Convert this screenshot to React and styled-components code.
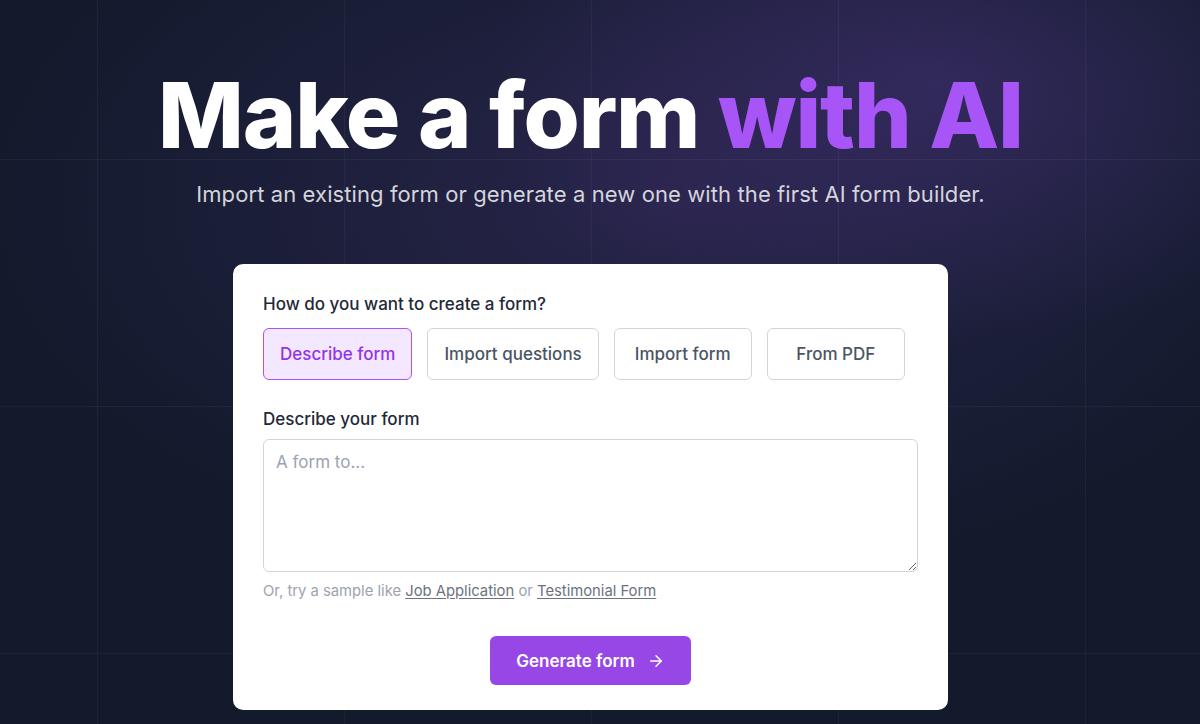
import styled, { createGlobalStyle } from 'styled-components';
import { useState } from 'react';

const GlobalStyle = createGlobalStyle`
  html, body {
    margin: 0;
    padding: 0;
    background: #121a2b;
  }
  * {
    box-sizing: border-box;
  }
  body {
    font-family: Inter, "Liberation Sans", sans-serif;
  }
`;

const modes = ['Describe form', 'Import questions', 'Import form', 'From PDF'];

export default function App() {
  const [mode, setMode] = useState('Describe form');

  return (
    <Page>
      <GlobalStyle />
      <Hero>
        <Title>
          Make a form <Accent>with AI</Accent>
        </Title>
        <Subtitle>
          Import an existing form or generate a new one with the first AI form builder.
        </Subtitle>
      </Hero>
      <Card>
        <Label>How do you want to create a form?</Label>
        <Modes>
          {modes.map(m => (
            <ModeButton
              key={m}
              type="button"
              $active={m === mode}
              onClick={() => setMode(m)}
            >
              {m}
            </ModeButton>
          ))}
        </Modes>
        <Label as="label" htmlFor="describe">
          Describe your form
        </Label>
        <TextArea id="describe" placeholder="A form to..." />
        <Hint>
          Or, try a sample like <HintLink href="#">Job Application</HintLink> or{' '}
          <HintLink href="#">Testimonial Form</HintLink>
        </Hint>
        <Footer>
          <GenerateButton type="button">
            Generate form
            <svg width="18" height="18" viewBox="0 0 24 24" fill="none" stroke="currentColor" strokeWidth="2" strokeLinecap="round" strokeLinejoin="round">
              <path d="M5 12h14" />
              <path d="M12 5l7 7-7 7" />
            </svg>
          </GenerateButton>
        </Footer>
      </Card>
    </Page>
  );
}

/* content is centred a little left of the middle: the real page had a scrollbar */
const Page = styled.div`
  position: relative;
  height: 724px;
  overflow: hidden;
  display: flex;
  flex-direction: column;
  align-items: center;
  padding: 68px 19px 0 0;
  background:
    linear-gradient(rgba(255, 255, 255, 0.045) 1px, transparent 1px) 0 -88px / 247px 247px,
    linear-gradient(90deg, rgba(255, 255, 255, 0.045) 1px, transparent 1px) 97px 0 / 247px 247px,
    radial-gradient(ellipse 560px 320px at 78% 12%, rgba(72, 52, 125, 0.5), transparent 80%),
    radial-gradient(ellipse 820px 460px at 55% 28%, rgba(58, 44, 100, 0.55), transparent 85%),
    #121a2b;
`;

const Hero = styled.div`
  display: flex;
  flex-direction: column;
  align-items: center;
`;

const Title = styled.h1`
  margin: 0;
  font-size: 91px;
  line-height: 94px;
  font-weight: 800;
  letter-spacing: -0.013em;
  color: #ffffff;
  white-space: nowrap;
`;

const Accent = styled.span`
  color: #a855f7;
`;

const Subtitle = styled.p`
  margin: 18px 0 0;
  font-size: 22px;
  line-height: 28px;
  font-weight: 400;
  letter-spacing: 0.1px;
  color: #d4d4dc;
`;

const Card = styled.div`
  margin-top: 56px;
  width: 715px;
  background: #ffffff;
  border-radius: 10px;
  padding: 28px 30px 25px;
  display: flex;
  flex-direction: column;
`;

const Label = styled.div`
  font-size: 17px;
  line-height: 24px;
  font-weight: 500;
  color: #1f2937;
`;

const Modes = styled.div`
  display: flex;
  gap: 15px;
  margin: 12px 0 27px;
`;

const ModeButton = styled.button`
  height: 52px;
  min-width: 138px;
  padding: 0 16px;
  border-radius: 6px;
  font-family: inherit;
  font-size: 17px;
  font-weight: 500;
  cursor: pointer;
  border: 1px solid ${p => (p.$active ? '#a855f7' : '#d1d5db')};
  background: ${p => (p.$active ? '#f3e8ff' : '#ffffff')};
  color: ${p => (p.$active ? '#9333ea' : '#4b5563')};
`;

const TextArea = styled.textarea`
  margin-top: 8px;
  width: 100%;
  height: 133px;
  padding: 10px 12px;
  border: 1px solid #d1d5db;
  border-radius: 6px;
  font-family: inherit;
  font-size: 17px;
  line-height: 24px;
  color: #1f2937;
  resize: vertical;
  outline: none;

  &::placeholder {
    color: #9ca3af;
  }
`;

const Hint = styled.p`
  margin: 8px 0 0;
  font-size: 14.8px;
  line-height: 22px;
  color: #9ca3af;
`;

const HintLink = styled.a`
  color: #6b7280;
  text-decoration: underline;
  text-underline-offset: 2px;
`;

const Footer = styled.div`
  display: flex;
  justify-content: center;
  margin-top: 34px;
`;

const GenerateButton = styled.button`
  display: flex;
  align-items: center;
  gap: 12px;
  height: 49px;
  padding: 0 26px;
  border: none;
  border-radius: 6px;
  background: #9747e6;
  color: #ffffff;
  font-family: inherit;
  font-size: 17px;
  font-weight: 600;
  cursor: pointer;
`;
